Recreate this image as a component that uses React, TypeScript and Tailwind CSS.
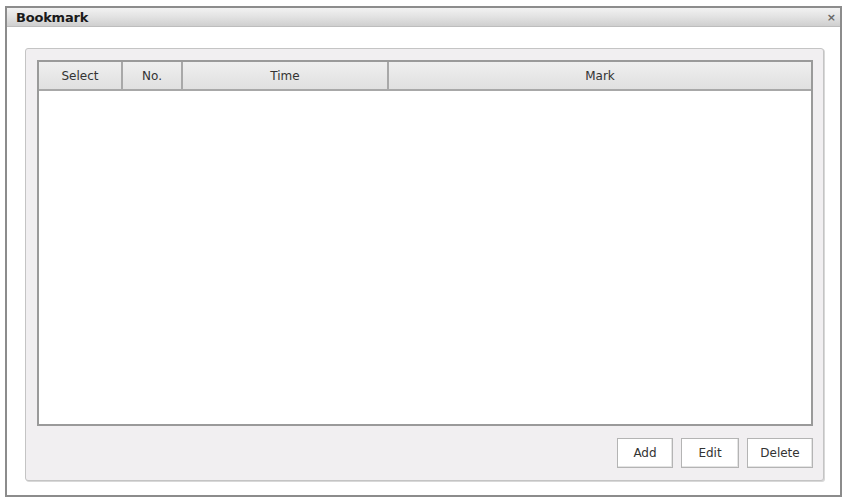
import React from 'react';

const columns = [
  { label: 'Select', w: 'w-[84px]' },
  { label: 'No.', w: 'w-[60px]' },
  { label: 'Time', w: 'w-[206px]' },
  { label: 'Mark', w: 'flex-1' },
];

const actions = [
  { label: 'Add', w: 'w-[56px]' },
  { label: 'Edit', w: 'w-[58px]' },
  { label: 'Delete', w: 'w-[66px]' },
];

export default function App() {
  return (
    <div className="w-[846px] h-[499px] bg-white pl-[5px] pt-[6px] font-['DejaVu_Sans',sans-serif] text-[#222]">
      <div className="w-[837px] h-[491px] border-2 border-[#8c8c8c] flex flex-col bg-white">
        {/* title bar */}
        <div className="h-[19px] flex items-center justify-between pl-[9px] pr-[4px] bg-gradient-to-b from-[#f2f2f2] via-[#e2e2e2] to-[#cfcfcf] border-b border-[#bdbdbd]">
          <span className="text-[13px] font-bold text-[#1a1a1a] tracking-[-0.2px] pt-[1px]">Bookmark</span>
          <span className="text-[11px] leading-none text-[#666] font-bold">×</span>
        </div>

        <div className="flex-1 pl-[18px] pr-[16px] pt-[21px] pb-[14px]">
          <div className="h-full rounded-[3px] border border-[#c4c4c4] bg-[#f1eff1] shadow-[1px_1px_0_#d8d8d8] pl-[11px] pr-[10px] pt-[11px] pb-[12px] flex flex-col">
            {/* list */}
            <div className="h-[366px] border-2 border-[#9a9a9a] bg-white flex flex-col">
              <div className="h-[29px] flex bg-gradient-to-b from-[#efefef] to-[#e0e0e0] border-b-2 border-[#a8a8a8]">
                {columns.map((c, i) => (
                  <div
                    key={c.label}
                    className={`${c.w} flex items-center justify-center text-[12px] text-[#333] ${i < columns.length - 1 ? 'border-r-2 border-[#a8a8a8]' : ''}`}
                  >
                    {c.label}
                  </div>
                ))}
              </div>
              <div className="flex-1" />
            </div>

            <div className="flex-1 flex items-end justify-end gap-[8px]">
              {actions.map((a) => (
                <button
                  key={a.label}
                  className={`${a.w} h-[30px] bg-white border border-[#b4b4b4] shadow-[inset_-1px_-1px_0_#e4e4e4] text-[12px] text-[#333]`}
                >
                  {a.label}
                </button>
              ))}
            </div>
          </div>
        </div>
      </div>
    </div>
  );
}
